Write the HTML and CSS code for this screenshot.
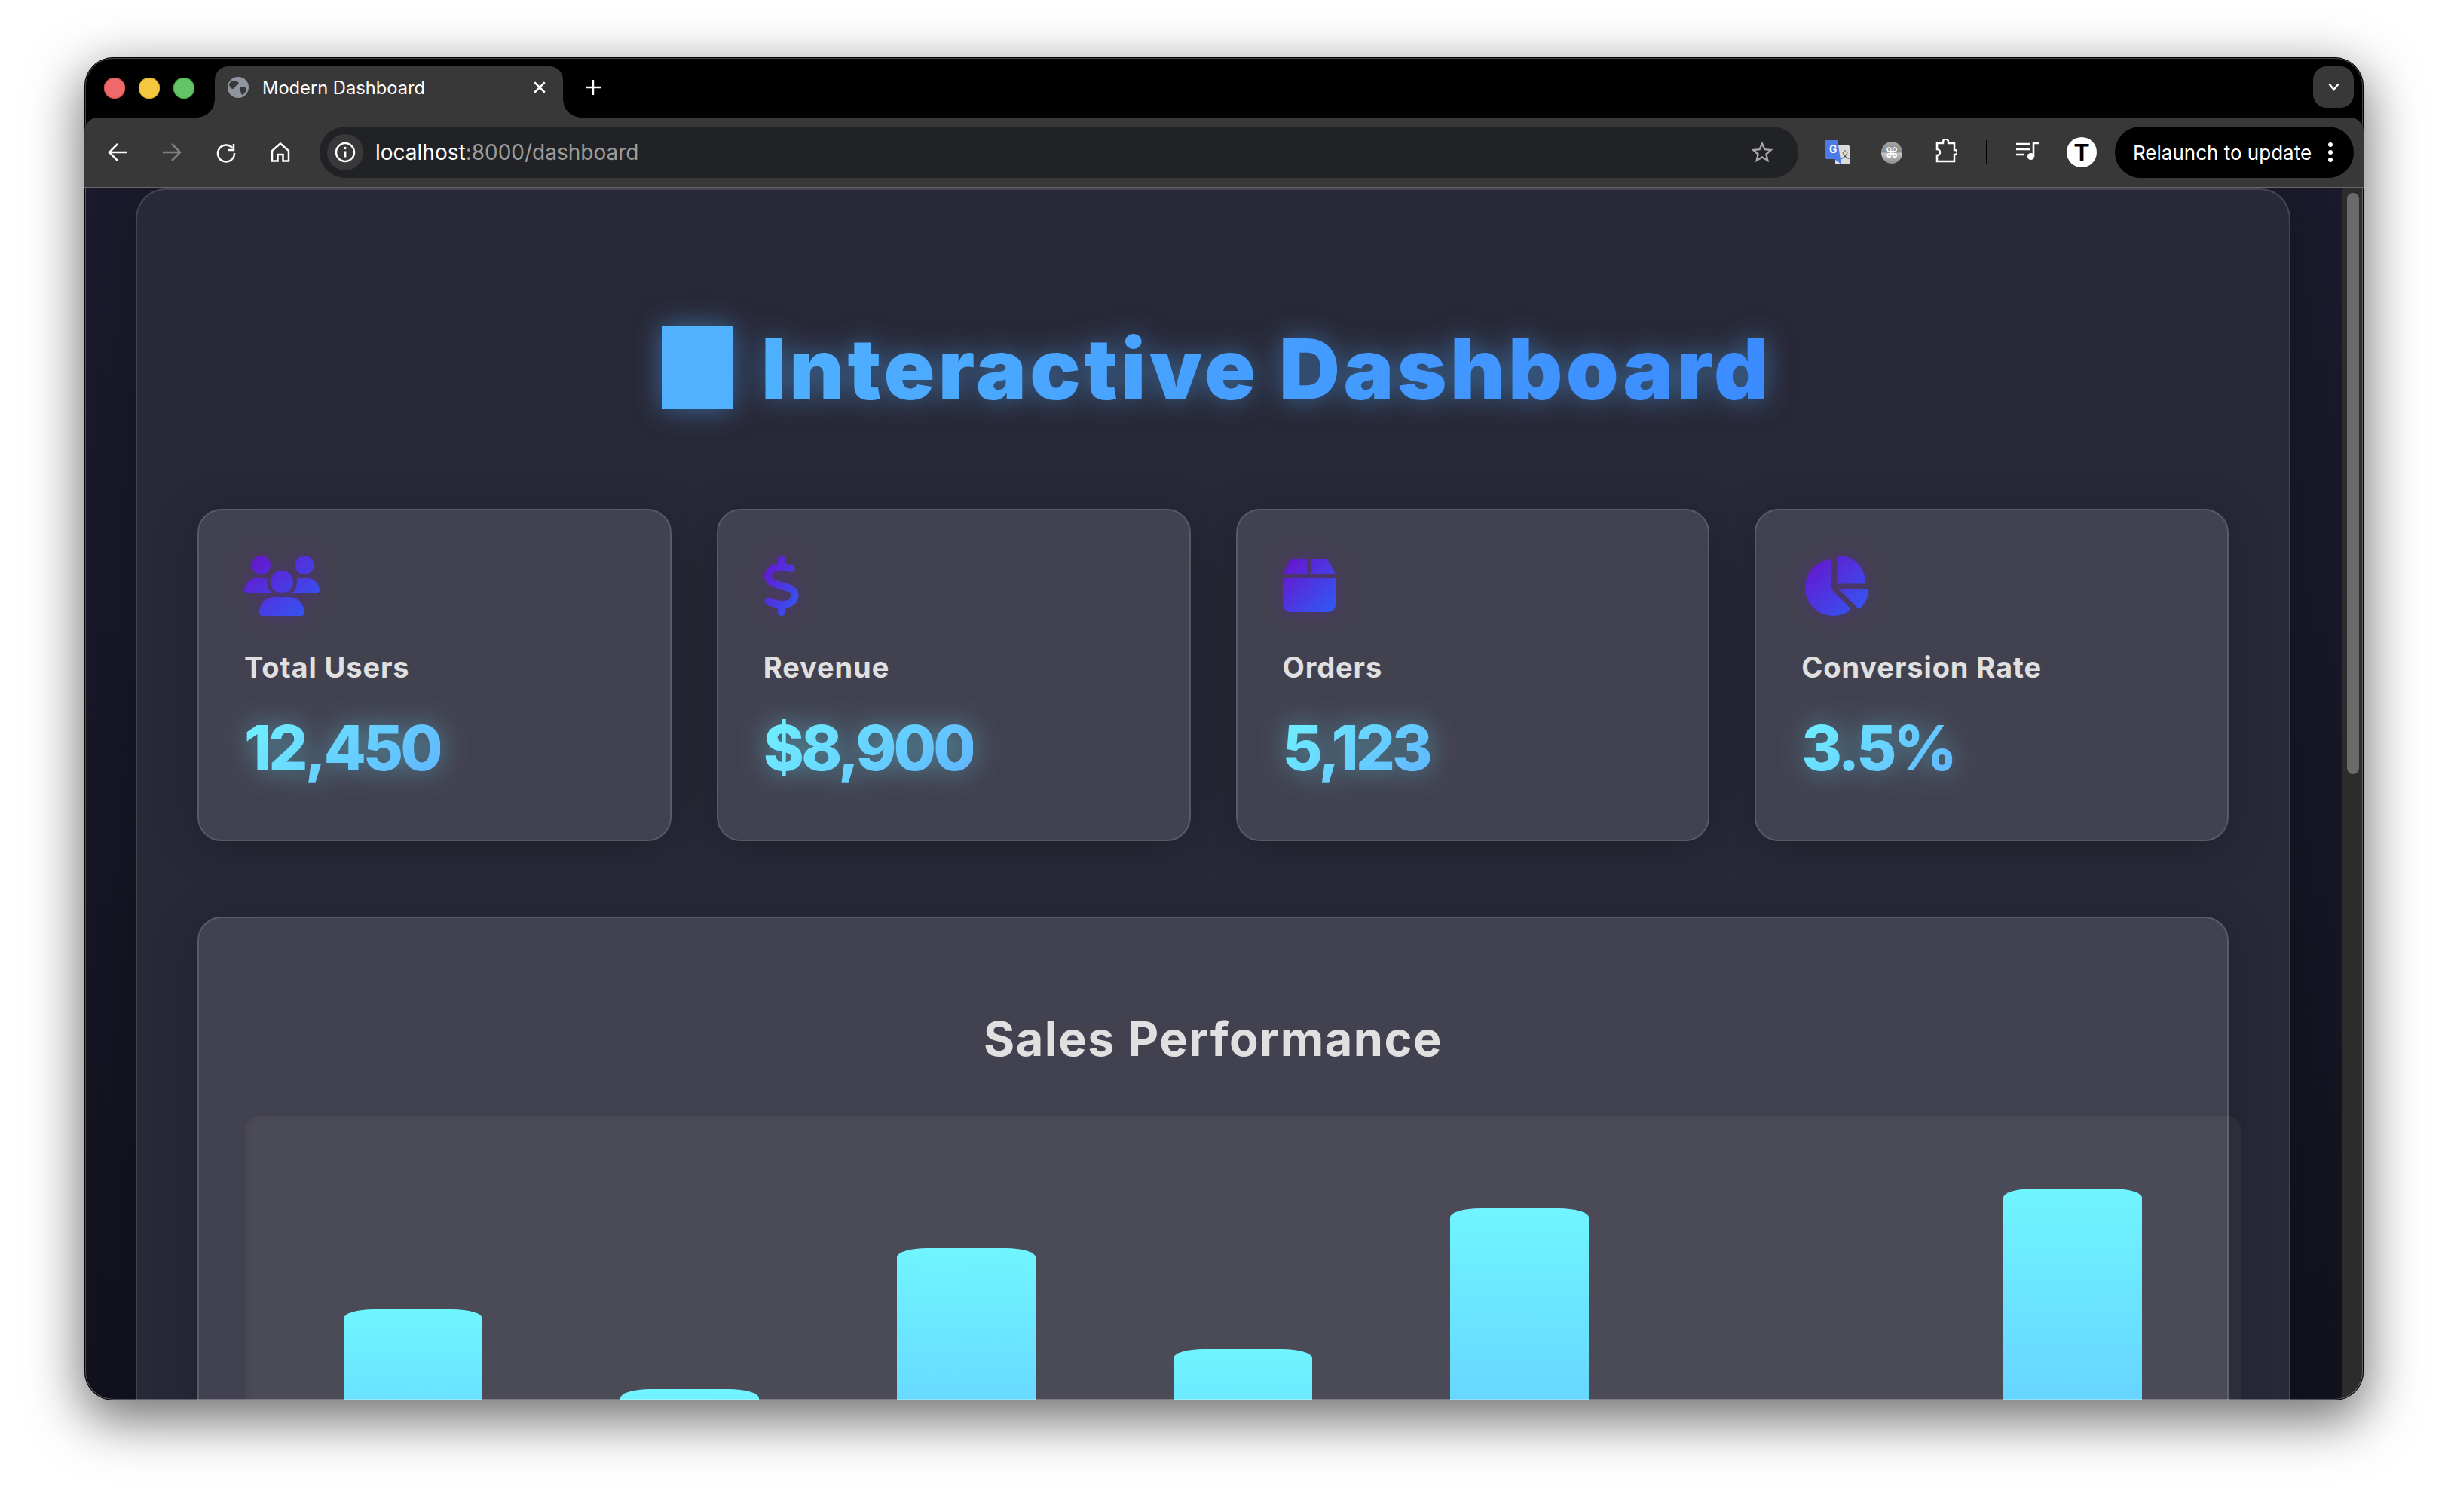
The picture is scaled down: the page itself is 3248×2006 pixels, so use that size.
FILE: index.html
```html
<!DOCTYPE html>
<html lang="en">
<head>
<meta charset="utf-8">
<title>Modern Dashboard</title>
<link rel="stylesheet" href="styles.css">
</head>
<body>
<svg class="defs" width="0" height="0" aria-hidden="true">
  <defs>
    <linearGradient id="iconGrad" x1="0" y1="0" x2="1" y2="1">
      <stop offset="0" stop-color="#6a11cb"/>
      <stop offset="1" stop-color="#2f5cf5"/>
    </linearGradient>
  </defs>
</svg>
<div class="window">
  <div class="tabstrip">
    <div class="lights">
      <span class="light red"></span><span class="light yellow"></span><span class="light green"></span>
    </div>
    <div class="tab">
      <svg class="favicon" viewBox="0 0 28 28"><circle cx="14" cy="14" r="14" fill="#8f96a1"/><path d="M6 5c3 1 6 0 8 2s-1 4-3 5-1 4-4 4-4-3-5-5c0-2 2-5 4-6zM17 14c3-1 6 0 8 1 0 3-2 7-5 9-2 0-2-3-3-5s-2-4 0-5z" fill="#383838"/></svg>
      <span class="tab-title">Modern Dashboard</span>
      <svg class="tab-close" viewBox="0 0 16 16"><path d="M2 2l12 12M14 2L2 14" stroke="#fff" stroke-width="2.2" fill="none"/></svg>
    </div>
    <svg class="newtab" viewBox="0 0 20 20"><path d="M10 0v20M0 10h20" stroke="#fff" stroke-width="2.4" fill="none"/></svg>
    <div class="tab-menu"><svg viewBox="0 0 14 10"><path d="M1.5 1.5L7 8l5.500-6.500" stroke="#fff" stroke-width="2.200" fill="none"/></svg></div>
  </div>
  <div class="toolbar">
    <div class="tool"><svg class="ico" viewBox="0 0 28 28"><path d="M26 14H4M14 3L3 14l11 11" stroke="#fff" stroke-width="2.500" fill="none"/></svg></div>
    <div class="tool"><svg class="ico" viewBox="0 0 28 28"><path d="M2 14h22M14 3l11 11-11 11" stroke="#808080" stroke-width="2.500" fill="none"/></svg></div>
    <div class="tool"><svg class="ico" viewBox="0 0 28 28"><path d="M22.500 8.500A11 11 0 1 0 25 15" stroke="#fff" stroke-width="2.500" fill="none"/><path d="M24 3v8h-8" stroke="#fff" stroke-width="2.500" fill="none"/></svg></div>
    <div class="tool"><svg class="ico" viewBox="0 0 28 28"><path d="M14 2.500L3 12v13.500h7.500V17h7v8.500H25V12z" stroke="#fff" stroke-width="2.500" fill="none"/></svg></div>
    <div class="omnibox">
      <div class="site-info"><svg class="ico" viewBox="0 0 28 28"><circle cx="14" cy="14" r="12" stroke="#fff" stroke-width="2.500" fill="none"/><path d="M14 12.500v8" stroke="#fff" stroke-width="2.800"/><circle cx="14" cy="8.500" r="1.700" fill="#fff"/></svg></div>
      <span class="url"><span class="url-host">localhost</span>:8000/dashboard</span>
      <svg class="ico star" viewBox="0 0 28 28"><path d="M14 2.500l3.400 7.700 8.300.8-6.300 5.500 1.900 8.200L14 20.400l-7.300 4.300 1.900-8.200L2.300 11l8.300-.8z" stroke="#a6a6a6" stroke-width="2.400" fill="none"/></svg>
    </div>
    <div class="tool">
      <svg class="translate" viewBox="0 0 32 32"><rect x="13" y="7" width="19" height="25" rx="1.500" fill="#dcdcdc"/><path d="M0 0h16l5 32-9-7H2a2 2 0 0 1-2-2z" fill="#4c7be8"/><text x="5" y="17" class="g-letter">G</text><text x="20" y="24" class="zi">文</text></svg>
    </div>
    <div class="tool"><span class="cmd">⌘</span></div>
    <div class="tool"><svg class="puzzle" viewBox="0 0 30 32"><path d="M3 6h8V4a3.500 3.500 0 0 1 7 0v2h8v9h1a3 3 0 0 1 0 6h-1v9H3v-8a4 4 0 0 0 0-8z" stroke="#fff" stroke-width="2.500" fill="none"/></svg></div>
    <span class="divider"></span>
    <div class="tool"><svg class="music" viewBox="0 0 30 24"><path d="M0 3h18M0 10h18M0 17h11" stroke="#fff" stroke-width="2.600" fill="none"/><path d="M23 20V2h7" stroke="#fff" stroke-width="2.600" fill="none"/><circle cx="19.500" cy="19.500" r="4.500" fill="#fff"/></svg></div>
    <div class="tool"><span class="avatar">T</span></div>
    <div class="relaunch">
      <span class="relaunch-text">Relaunch to update</span>
      <span class="dots"><i></i><i></i><i></i></span>
    </div>
  </div>
  <div class="viewport">
    <div class="page">
      <main class="panel">
        <h1 class="title"><span class="title-glyph"></span><span class="title-text">Interactive Dashboard</span></h1>
        <section class="cards">
          <article class="card">
            <svg class="icon users" viewBox="0 0 640 512"><path d="M144 0a80 80 0 1 1 0 160A80 80 0 1 1 144 0zM512 0a80 80 0 1 1 0 160A80 80 0 1 1 512 0zM0 298.700C0 239.800 47.800 192 106.700 192h42.700c15.900 0 31 3.500 44.600 9.700c-1.300 7.200-1.900 14.700-1.900 22.300c0 38.200 16.800 72.500 43.300 96c-.2 0-.4 0-.7 0H21.300C9.600 320 0 310.400 0 298.700zM405.300 320c-.2 0-.4 0-.7 0c26.600-23.500 43.300-57.800 43.300-96c0-7.600-.7-15-1.900-22.300c13.600-6.300 28.700-9.700 44.600-9.700h42.700C592.200 192 640 239.800 640 298.700c0 11.800-9.600 21.300-21.300 21.300H405.300zM224 224a96 96 0 1 1 192 0 96 96 0 1 1 -192 0zM128 485.300C128 411.700 187.700 352 261.300 352H378.700C452.300 352 512 411.700 512 485.300c0 14.700-11.900 26.700-26.700 26.700H154.700c-14.700 0-26.700-11.900-26.700-26.700z"/></svg>
            <h3 class="card-label">Total Users</h3>
            <p class="card-value">12,450</p>
          </article>
          <article class="card">
            <svg class="icon dollar" viewBox="0 0 320 512"><path d="M160 0c17.700 0 32 14.300 32 32V67.700c1.600 .2 3.100 .4 4.700 .7c.4 .1 .7 .1 1.100 .2l48 8.800c17.400 3.200 28.900 19.900 25.700 37.200s-19.900 28.900-37.200 25.700l-47.500-8.700c-31.300-4.600-58.900-1.500-78.300 6.200s-27.200 18.300-29 28.100c-2 10.700-.5 16.700 1.200 20.400c1.800 3.900 5.500 8.300 12.800 13.200c16.300 10.700 41.300 17.700 73.700 26.300l2.900 .8c28.600 7.600 63.600 16.800 89.600 33.800c14.200 9.300 27.600 21.900 35.900 39.500c8.500 17.900 10.300 37.900 6.400 59.200c-6.900 38-33.100 63.400-65.600 76.700c-13.700 5.600-28.600 9.200-44.400 11V480c0 17.700-14.300 32-32 32s-32-14.300-32-32V445.100c-.4-.1-.9-.1-1.300-.2l-.2 0 0 0c-24.400-3.800-64.500-14.300-91.500-26.300c-16.100-7.200-23.400-26.100-16.200-42.200s26.100-23.400 42.200-16.200c20.900 9.300 55.300 18.500 75.200 21.600c31.900 4.700 58.200 2 76-5.300c16.900-6.900 24.600-16.900 26.800-28.900c1.900-10.600 .4-16.700-1.300-20.400c-1.900-4-5.600-8.400-13-13.300c-16.400-10.700-41.500-17.700-74-26.300l-2.800-.7 0 0C119.400 279.300 84.400 270 58.400 253c-14.200-9.300-27.500-22-35.800-39.600c-8.400-17.900-10.100-37.900-6.100-59.200C23.700 116 52.300 91.200 84.800 78.300c13.300-5.300 27.900-8.900 43.200-11V32c0-17.700 14.300-32 32-32z"/></svg>
            <h3 class="card-label">Revenue</h3>
            <p class="card-value">$8,900</p>
          </article>
          <article class="card">
            <svg class="icon box" viewBox="0 0 448 512"><path d="M50.700 58.500L0 160H208V32H93.700C75.500 32 58.900 42.300 50.700 58.500zM240 160H448L397.300 58.500C389.100 42.300 372.500 32 354.300 32H240V160zm208 32H0V416c0 35.300 28.700 64 64 64H384c35.300 0 64-28.700 64-64V192z"/></svg>
            <h3 class="card-label">Orders</h3>
            <p class="card-value">5,123</p>
          </article>
          <article class="card">
            <svg class="icon pie" viewBox="0 0 576 512"><path d="M304 240V16.600c0-9 7-16.600 16-16.600C443.700 0 544 100.300 544 224c0 9-7.600 16-16.600 16H304zM32 272C32 150.700 122.100 50.300 239 34.300c9.200-1.300 17 6.100 17 15.400V288L412.500 444.500c6.700 6.700 6.200 17.700-1.500 23.100C371.800 495.600 323.800 512 272 512C139.500 512 32 404.600 32 272zm526.400 16c9.300 0 16.600 7.800 15.400 17c-7.700 55.900-34.600 105.600-73.900 142.300c-6 5.600-15.400 5.200-21.200-.7L320 288H558.400z"/></svg>
            <h3 class="card-label">Conversion Rate</h3>
            <p class="card-value">3.5%</p>
          </article>
        </section>
        <section class="sales">
          <h2 class="sales-title">Sales Performance</h2>
          <div class="chart">
            <div class="bar" style="height:440px"></div>
            <div class="bar" style="height:334px"></div>
            <div class="bar" style="height:521px"></div>
            <div class="bar" style="height:387px"></div>
            <div class="bar" style="height:574px"></div>
            <div class="bar" style="height:200px"></div>
            <div class="bar" style="height:600px"></div>
          </div>
        </section>
      </main>
    </div>
    <div class="scrollbar"><div class="thumb"></div></div>
  </div>
</div>
</body>
</html>
```
FILE: styles.css
```css
* { box-sizing: border-box; }
html, body { margin: 0; padding: 0; background: #fff; }
body { width: 3248px; height: 2006px; overflow: hidden; font-family: Inter, "Liberation Sans", sans-serif; padding: 76px 112px 0; }
.defs { position: absolute; }

.window {
  position: relative; width: 3024px; height: 1782px; background: #000;
  border-radius: 38px; overflow: hidden;
  box-shadow: 0 22px 70px 4px rgba(0,0,0,.56);
  display: flex; flex-direction: column;
}
.window::after {
  content: ""; position: absolute; inset: 0; border-radius: 38px; pointer-events: none;
  box-shadow: inset 0 0 0 1px #000, inset 0 0 0 2px rgba(255,255,255,.28);
}

.tabstrip { height: 80px; display: flex; align-items: center; flex: none; }
.lights { display: flex; gap: 18px; margin-left: 26px; margin-top: 2px; }
.light { width: 28px; height: 28px; border-radius: 50%; }
.red { background: #ee6a6a; box-shadow: inset 0 0 0 1px #d04c4c; }
.yellow { background: #f4c93f; box-shadow: inset 0 0 0 1px #d8aa2a; }
.green { background: #62c466; box-shadow: inset 0 0 0 1px #4aa84e; }

.tab {
  position: relative; align-self: flex-end; width: 462px; height: 68px; margin-left: 27px;
  background: #383838; border-radius: 18px 18px 0 0;
  display: flex; align-items: center; padding: 0 22px 12px 17px;
}
.tab::before, .tab::after {
  content: ""; position: absolute; bottom: 0; width: 24px; height: 24px;
}
.tab::before { left: -24px; background: radial-gradient(circle at 0 0, transparent 23.500px, #383838 24px); }
.tab::after { right: -24px; background: radial-gradient(circle at 100% 0, transparent 23.500px, #383838 24px); }
.favicon { width: 28px; height: 28px; flex: none; }
.tab-title { margin-left: 18px; font-size: 23.700px; color: #fff; white-space: nowrap; flex: 1; }
.tab-close { width: 18px; height: 18px; flex: none; }
.newtab { width: 20px; height: 20px; margin-left: 30px; flex: none; margin-top: 0; }
.tab-menu {
  margin-left: auto; margin-right: 13px; width: 54px; height: 55px; border-radius: 18px; background: #383838;
  display: flex; align-items: center; justify-content: center; margin-top: -1px; flex: none;
}
.tab-menu svg { width: 17px; height: 11px; }

.toolbar {
  height: 94px; flex: none; background: #383838; border-bottom: 2px solid #666;
  border-radius: 18px 18px 0 0; display: flex; align-items: center; padding-left: 8px;
  position: relative; z-index: 1;
}
.tool { width: 72px; height: 48px; display: flex; align-items: center; justify-content: center; flex: none; }
.ico { width: 28px; height: 28px; flex: none; }
.omnibox {
  flex: 1; height: 68px; margin: 0 16px; background: #212225; border-radius: 34px;
  display: flex; align-items: center; padding: 0 34px 0 10px;
}
.site-info { width: 48px; height: 48px; border-radius: 50%; background: #383838; display: flex; align-items: center; justify-content: center; flex: none; }
.url { margin-left: 16px; font-size: 28px; color: #9b9b9b; flex: 1; white-space: nowrap; }
.url-host { color: #fff; }
.translate { width: 32px; height: 32px; }
.g-letter { font: 700 15px Roboto, sans-serif; fill: #fff; }
.zi { font: 400 12px "Noto Sans CJK SC", sans-serif; fill: #555; }
.cmd {
  width: 28px; height: 29px; border-radius: 50%;
  background: linear-gradient(180deg, #a4a4a4, #8a8a8a 48%, #c4c4c4 52%, #8e8e8e);
  color: #fff; font: 700 18px "DejaVu Sans", sans-serif;
  display: flex; align-items: center; justify-content: center;
}
.puzzle { width: 30px; height: 32px; margin-top: -4px; flex: none; }
.divider { width: 2px; height: 32px; background: #000; margin: 0 17px; flex: none; }
.music { width: 30px; height: 24px; margin-top: -4px; }
.avatar {
  width: 40px; height: 40px; border-radius: 50%; background: #fff; color: #000;
  font: 700 32px "Liberation Sans", sans-serif; display: flex; align-items: center; justify-content: center;
}
.relaunch {
  width: 317px; height: 68px; margin-left: 8px; margin-right: 13px; border-radius: 34px; background: #000;
  display: flex; align-items: center; padding-left: 24px; flex: none;
}
.relaunch-text { font-size: 26px; color: #fff; white-space: nowrap; width: 259px; flex: none; }
.dots { display: flex; flex-direction: column; gap: 4px; }
.dots i { display: block; width: 6px; height: 6px; border-radius: 50%; background: #fff; }

.viewport { flex: 1; min-height: 0; display: flex; overflow: hidden; }
.page { flex: 1; min-width: 0; height: 100%; overflow: hidden; background: linear-gradient(180deg, #1a1a2c, #12121e); }
.scrollbar { width: 29px; flex: none; background: #2c2c2c; border-left: 1px solid #3f3f3f; padding: 6px 6px 0 6px; }
.thumb { height: 771px; border-radius: 8px; background: #6b6b6b; }

.panel {
  width: 2859px; margin: 0 auto; background: #282837; border: 2px solid rgba(255,255,255,.14);
  border-radius: 40px; padding: 180px 80px 80px;
  box-shadow: 0 0 60px rgba(0,0,0,.2);
}
.title { margin: 0 0 132px; padding-left: 10px; height: 111px; display: flex; align-items: center; justify-content: center; gap: 37px; filter: drop-shadow(0 0 18px rgba(79,172,254,.5)); }
.title-glyph { width: 95px; height: 111px; background: #52b1ff; flex: none; }
.title-text {
  font-size: 112px; line-height: 111px; font-weight: 900; letter-spacing: 4.400px; white-space: nowrap; padding-top: 4px;
  background: linear-gradient(90deg, #4fb0ff, #3b8bff);
  -webkit-background-clip: text; background-clip: text; color: transparent;
}

.cards { display: grid; grid-template-columns: repeat(4, 1fr); gap: 60px; margin-bottom: 100px; }
.card, .sales {
  background: #42414f; border: 2px solid #5a5a66; border-radius: 32px;
  box-shadow: 0 8px 60px rgba(0,0,0,.22);
}
.card { height: 441px; padding: 60px; }
.icon { display: block; height: 80px; fill: url(#iconGrad); filter: drop-shadow(0 0 12px rgba(106,17,203,.35)); }
.users { width: 100px; }
.dollar { width: 50px; margin-left: -1px; }
.box { width: 70px; }
.pie { width: 90px; }
.card-label { margin: 44px 0 0; font-size: 38px; line-height: 48px; font-weight: 700; letter-spacing: .9px; color: #e0e0e0; white-space: nowrap; }
.card-value {
  display: inline-block; margin: 34px 0 0; font-size: 82px; line-height: 100px; font-weight: 800; letter-spacing: -4px; white-space: nowrap;
  background: linear-gradient(135deg, #70f3ff, #5fb3ff);
  -webkit-background-clip: text; background-clip: text; color: transparent;
  filter: drop-shadow(0 0 18px rgba(100,225,255,.5));
}

.sales { height: 1100px; padding: 110px 60px 60px; }
.sales-title { margin: 0 0 52px; text-align: center; font-size: 63px; line-height: 100px; font-weight: 700; letter-spacing: 1.500px; color: #e0e0e0; }
.chart {
  width: 2648px; height: 737px; margin-left: 2px; padding: 0 40px 40px 38px; background: rgba(255,255,255,.05); border-radius: 20px;
  box-shadow: inset 0 0 12px rgba(0,0,0,.06);
  display: flex; align-items: flex-end; justify-content: space-around;
}
.bar { width: 184px; flex: none; border-radius: 40px 40px 0 0 / 12px 12px 0 0; background: linear-gradient(180deg, #70f5ff, #5cb0ff); }
```
